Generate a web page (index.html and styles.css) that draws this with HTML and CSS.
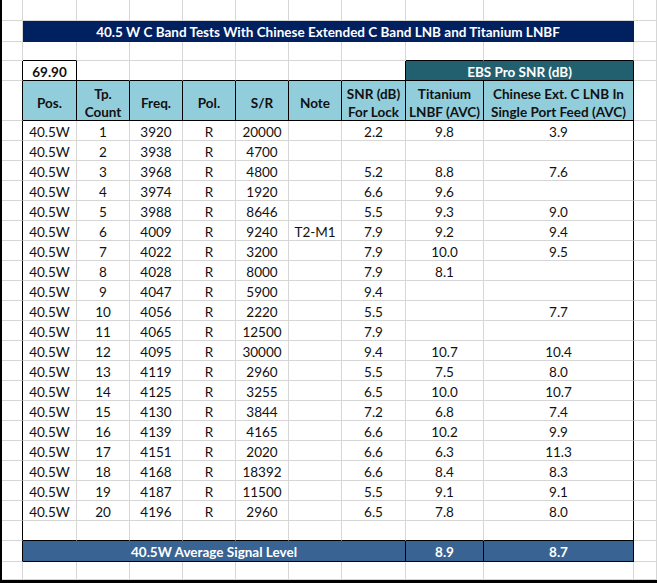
FILE: index.html
```html
<!DOCTYPE html>
<html>
<head>
<meta charset="utf-8">
<link rel="stylesheet" href="styles.css">
</head>
<body>
<div class="sheet">
  <!-- row 1 -->
  <span></span><span></span><span></span><span></span><span></span><span></span><span></span><span></span><span></span><span></span><span></span>
  <!-- row 2: title -->
  <span></span><span class="title">40.5 W C Band Tests With Chinese Extended C Band LNB and Titanium LNBF</span><span></span>
  <!-- row 3 -->
  <span></span><span class="bb"></span><span></span><span></span><span></span><span></span><span></span><span></span><span class="bb"></span><span class="bb"></span><span></span>
  <!-- row 4 -->
  <span class="br"></span><span class="br bb bold">69.90</span><span class="bb"></span><span class="bb"></span><span class="bb"></span><span class="bb"></span><span class="bb"></span><span class="br bb"></span><span class="ebs br bb">EBS Pro SNR (dB)</span><span></span>
  <!-- row 5: header -->
  <span class="br"></span>
  <span class="hdr br bb">Pos.</span>
  <span class="hdr br bb">Tp.<br>Count</span>
  <span class="hdr br bb">Freq.</span>
  <span class="hdr br bb">Pol.</span>
  <span class="hdr br bb">S/R</span>
  <span class="hdr br bb">Note</span>
  <span class="hdr br bb">SNR (dB)<br>For Lock</span>
  <span class="hdr br bb">Titanium<br>LNBF (AVC)</span>
  <span class="hdr br bb">Chinese Ext. C LNB In<br>Single Port Feed (AVC)</span>
  <span></span>
  <!-- data rows -->
  <span class="br"></span><span>40.5W</span><span>1</span><span>3920</span><span>R</span><span>20000</span><span></span><span>2.2</span><span>9.8</span><span class="br">3.9</span><span></span>
  <span class="br"></span><span>40.5W</span><span>2</span><span>3938</span><span>R</span><span>4700</span><span></span><span></span><span></span><span class="br"></span><span></span>
  <span class="br"></span><span>40.5W</span><span>3</span><span>3968</span><span>R</span><span>4800</span><span></span><span>5.2</span><span>8.8</span><span class="br">7.6</span><span></span>
  <span class="br"></span><span>40.5W</span><span>4</span><span>3974</span><span>R</span><span>1920</span><span></span><span>6.6</span><span>9.6</span><span class="br"></span><span></span>
  <span class="br"></span><span>40.5W</span><span>5</span><span>3988</span><span>R</span><span>8646</span><span></span><span>5.5</span><span>9.3</span><span class="br">9.0</span><span></span>
  <span class="br"></span><span>40.5W</span><span>6</span><span>4009</span><span>R</span><span>9240</span><span>T2-M1</span><span>7.9</span><span>9.2</span><span class="br">9.4</span><span></span>
  <span class="br"></span><span>40.5W</span><span>7</span><span>4022</span><span>R</span><span>3200</span><span></span><span>7.9</span><span>10.0</span><span class="br">9.5</span><span></span>
  <span class="br"></span><span>40.5W</span><span>8</span><span>4028</span><span>R</span><span>8000</span><span></span><span>7.9</span><span>8.1</span><span class="br"></span><span></span>
  <span class="br"></span><span>40.5W</span><span>9</span><span>4047</span><span>R</span><span>5900</span><span></span><span>9.4</span><span></span><span class="br"></span><span></span>
  <span class="br"></span><span>40.5W</span><span>10</span><span>4056</span><span>R</span><span>2220</span><span></span><span>5.5</span><span></span><span class="br">7.7</span><span></span>
  <span class="br"></span><span>40.5W</span><span>11</span><span>4065</span><span>R</span><span>12500</span><span></span><span>7.9</span><span></span><span class="br"></span><span></span>
  <span class="br"></span><span>40.5W</span><span>12</span><span>4095</span><span>R</span><span>30000</span><span></span><span>9.4</span><span>10.7</span><span class="br">10.4</span><span></span>
  <span class="br"></span><span>40.5W</span><span>13</span><span>4119</span><span>R</span><span>2960</span><span></span><span>5.5</span><span>7.5</span><span class="br">8.0</span><span></span>
  <span class="br"></span><span>40.5W</span><span>14</span><span>4125</span><span>R</span><span>3255</span><span></span><span>6.5</span><span>10.0</span><span class="br">10.7</span><span></span>
  <span class="br"></span><span>40.5W</span><span>15</span><span>4130</span><span>R</span><span>3844</span><span></span><span>7.2</span><span>6.8</span><span class="br">7.4</span><span></span>
  <span class="br"></span><span>40.5W</span><span>16</span><span>4139</span><span>R</span><span>4165</span><span></span><span>6.6</span><span>10.2</span><span class="br">9.9</span><span></span>
  <span class="br"></span><span>40.5W</span><span>17</span><span>4151</span><span>R</span><span>2020</span><span></span><span>6.6</span><span>6.3</span><span class="br">11.3</span><span></span>
  <span class="br"></span><span>40.5W</span><span>18</span><span>4168</span><span>R</span><span>18392</span><span></span><span>6.6</span><span>8.4</span><span class="br">8.3</span><span></span>
  <span class="br"></span><span>40.5W</span><span>19</span><span>4187</span><span>R</span><span>11500</span><span></span><span>5.5</span><span>9.1</span><span class="br">9.1</span><span></span>
  <span class="br"></span><span>40.5W</span><span>20</span><span>4196</span><span>R</span><span>2960</span><span></span><span>6.5</span><span>7.8</span><span class="br">8.0</span><span></span>
  <!-- blank row -->
  <span class="br"></span><span class="bb"></span><span class="bb"></span><span class="bb"></span><span class="bb"></span><span class="bb"></span><span class="bb"></span><span class="bb"></span><span class="bb"></span><span class="br bb"></span><span></span>
  <!-- average row -->
  <span class="br"></span><span class="avg avg-label br bb">40.5W Average Signal Level</span><span class="avg br bb">8.9</span><span class="avg br bb">8.7</span><span></span>
  <!-- last row -->
  <span></span><span></span><span></span><span></span><span></span><span></span><span></span><span></span><span></span><span></span><span></span>
</div>
</body>
</html>
```

FILE: styles.css
```css
html, body {
  margin: 0;
  padding: 0;
  background: #ffffff;
}

.sheet {
  width: 657px;
  box-sizing: border-box;
  border-left: 2px solid #000;
  border-bottom: 3px solid #000;
  display: grid;
  grid-template-columns: 21px 54px 53px 53px 53px 53px 53px 64px 78px 150px 23px;
  grid-template-rows: 21px 21px 19px 20px 40px repeat(20, 20px) 20px 21px 18px;
  font-family: Lato, "Open Sans", "Liberation Sans", sans-serif;
  font-size: 13.5px;
  color: #111;
}

.sheet > span {
  box-sizing: border-box;
  border-right: 1px solid #d6d6d6;
  border-bottom: 1px solid #d6d6d6;
  display: flex;
  align-items: center;
  justify-content: center;
  text-align: center;
  white-space: nowrap;
  line-height: 18px;
  padding-top: 2px;
  min-width: 0;
}

.sheet > span.br { border-right-color: #000; }
.sheet > span.bb { border-bottom-color: #000; }

.bold { font-weight: 700; }

.sheet > span.title {
  grid-column: span 9;
  background: #002060;
  border-color: #002060;
  color: #fff;
  font-weight: 700;
  padding-top: 1px;
}

.sheet > span.ebs {
  grid-column: span 2;
  background: #23606f;
  color: #fff;
  font-weight: 700;
}

.sheet > span.hdr {
  background: #92cddc;
  font-weight: 700;
  padding-top: 4px;
}

.sheet > span.avg {
  background: #386393;
  color: #fff;
  font-weight: 700;
}

.sheet > span.avg-label {
  grid-column: span 7;
}
```
